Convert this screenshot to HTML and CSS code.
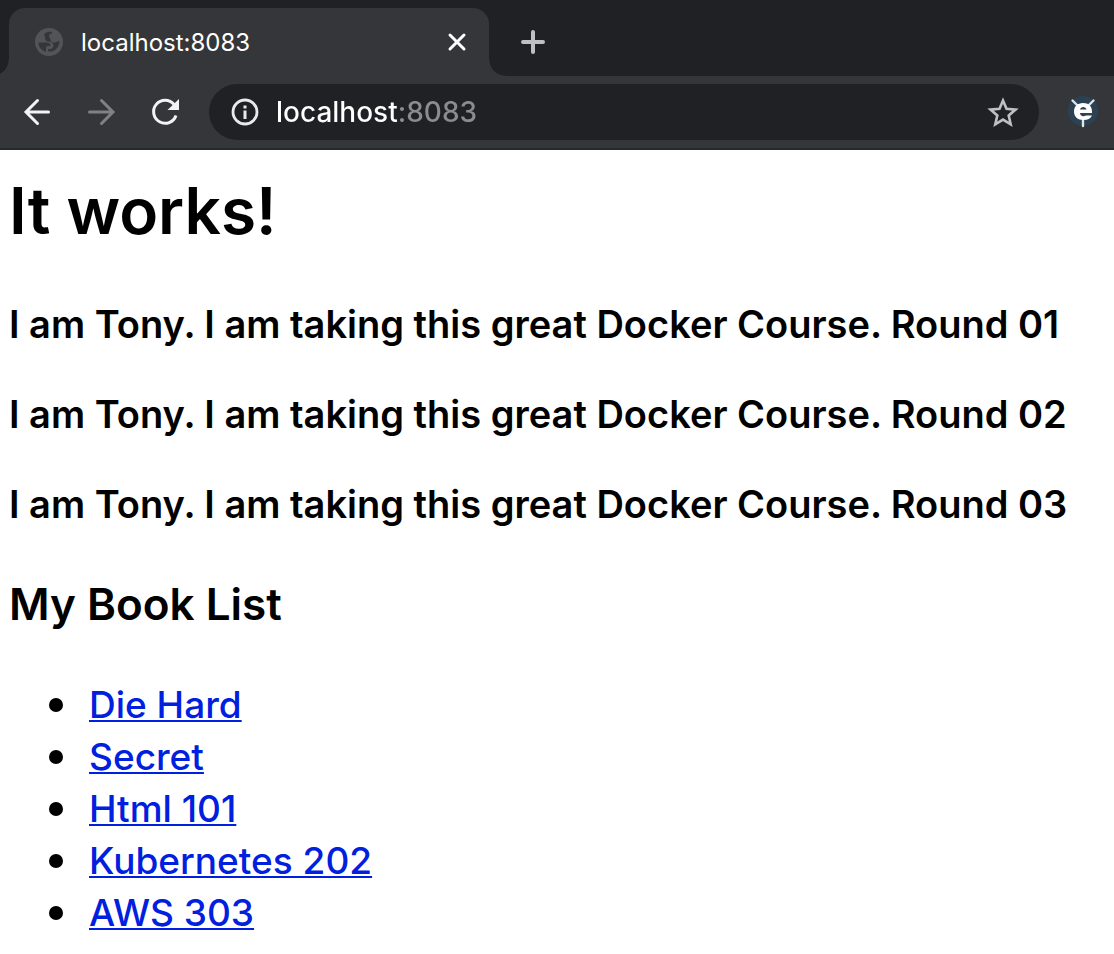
FILE: index.html
```html
<!DOCTYPE html>
<html lang="en">
<head>
<meta charset="utf-8">
<title>localhost:8083</title>
<link rel="stylesheet" href="styles.css">
</head>
<body>
<header class="browser">
  <div class="tabs">
    <div class="tab">
      <svg class="globe" viewBox="0 0 28 28" aria-hidden="true"><circle cx="14" cy="14" r="14" fill="#525458"/><path d="M3.500 14.500h8.500c2.500 0 3.500 1.500 3.500 3.500h-2.500c-1.500 0-2 1-2 2v4C6.500 22.500 3.500 19 3.500 14.500zM9.500 5.500C12 4 14 3.500 17 4v1.500c-2 0-3 1-3 2.500 0 2 1.500 1.500 1.500 3.500 0 2 1.500 3 3.500 3 2.500 0 3-1.500 5.500-1.500 0 5-3 9-7.500 10.500h-4v-2.500c3 0 5.500-.500 5.500-3.500 0-2-2-4-5-4-2.500 0-3.500-1.500-3.500-4 0-1.500-1-2-.500-4z" fill="#35363a"/></svg>
      <span class="tab-title">localhost:8083</span>
      <button class="icon-button close" aria-label="Close tab"><svg viewBox="0 0 20 20"><path d="M3 3l14 14M17 3L3 17" stroke="#fff" stroke-width="3" stroke-linecap="round"/></svg></button>
    </div>
    <button class="icon-button new-tab" aria-label="New tab"><svg viewBox="0 0 28 28"><path d="M14 4v20M4 14h20" stroke="#bdc1c6" stroke-width="4" stroke-linecap="round"/></svg></button>
  </div>
  <div class="toolbar">
    <nav class="nav" aria-label="History">
      <button class="icon-button" aria-label="Back"><svg viewBox="0 0 32 32"><path d="M27.500 16H6M16.500 4.500L5 16l11.500 11.500" fill="none" stroke="#f1f3f4" stroke-width="3" stroke-linecap="round"/></svg></button>
      <button class="icon-button" aria-label="Forward" disabled><svg viewBox="0 0 32 32"><path d="M4.500 16H26M16.500 4.500L28 16 16.500 27.500" fill="none" stroke="#7f8185" stroke-width="3" stroke-linecap="round"/></svg></button>
      <button class="icon-button" aria-label="Reload"><svg viewBox="0 0 32 32"><path d="M27 19.500A11.500 11.500 0 1 1 25 8.500" fill="none" stroke="#f1f3f4" stroke-width="3"/><path d="M30 3v11H18.500z" fill="#f1f3f4"/></svg></button>
    </nav>
    <div class="address">
      <button class="icon-button info" aria-label="View site information"><svg viewBox="0 0 28 28"><circle cx="14" cy="14" r="12" fill="none" stroke="#e8eaed" stroke-width="2.800"/><path d="M12.500 12.500h3V21h-3zM12.500 7.500h3v3h-3z" fill="#e8eaed"/></svg></button>
      <input class="url" type="text" value="localhost:8083" aria-label="Address" spellcheck="false">
      <button class="icon-button" aria-label="Bookmark this page"><svg viewBox="0 0 32 32"><path d="M16 4.500l3.500 8.300 9 .800-6.800 5.900 2 8.800L16 23.600l-7.700 4.700 2-8.800-6.800-5.900 9-.800z" fill="none" stroke="#bdc1c6" stroke-width="2.600"/></svg></button>
    </div>
    <button class="icon-button extension" aria-label="Extension"><svg viewBox="0 0 32 32"><circle cx="16" cy="15" r="15" fill="#2b4254"/><path d="M5.500 4.500l5 5M26.500 4.500l-5 5M16 23v7" stroke="#dfe6ea" stroke-width="2.400" stroke-linecap="round"/><path d="M25 17c.500-7-3.500-10-9-10S7 10.500 7 15.500 10.500 24 16.500 24c4.500 0 7-1.500 8.500-4.500h-6c-3 1.500-6 .500-6-2.500zM13 13.500c.500-3.500 6-3.500 6.500 0z" fill="#fff" fill-rule="evenodd"/></svg></button>
  </div>
</header>
<main class="page">
  <h1 class="title">It works!</h1>
  <div class="rounds">
    <h4 class="round">I am Tony. I am taking this great Docker Course. Round 01</h4>
    <h4 class="round">I am Tony. I am taking this great Docker Course. Round 02</h4>
    <h4 class="round">I am Tony. I am taking this great Docker Course. Round 03</h4>
  </div>
  <h3 class="subtitle">My Book List</h3>
  <ul class="books">
    <li><a href="#die-hard">Die Hard</a></li>
    <li><a href="#secret">Secret</a></li>
    <li><a href="#html">Html 101</a></li>
    <li><a href="#kubernetes">Kubernetes 202</a></li>
    <li><a href="#aws">AWS 303</a></li>
  </ul>
</main>
</body>
</html>
```
FILE: styles.css
```css
* { box-sizing: border-box; }
body { margin: 0; background: #fff; color: #000; font-family: Inter, "Liberation Sans", sans-serif; }

.browser { background: #35363a; border-bottom: 2px solid #28292b; }
.icon-button { display: block; flex: none; width: 32px; height: 32px; padding: 0; border: 0; background: none; }
.icon-button svg { display: block; width: 100%; height: 100%; }

.tabs { display: flex; align-items: center; height: 76px; padding: 8px 9px 0; background: #202124; }
.tab { position: relative; display: flex; align-items: center; width: 480px; height: 68px; padding: 0 22px 0 26px; border-radius: 16px 16px 0 0; background: #35363a; }
.tab::before, .tab::after { content: ""; position: absolute; bottom: 0; width: 16px; height: 16px; }
.tab::before { right: 100%; background: radial-gradient(circle at 0 0, #202124 15px, #35363a 16px); }
.tab::after { left: 100%; background: radial-gradient(circle at 100% 0, #202124 15px, #35363a 16px); }
.globe { width: 28px; height: 28px; }
.tab-title { flex: 1; margin-left: 18px; color: #fff; font-size: 24px; }
.close { width: 20px; height: 20px; }
.new-tab { width: 28px; height: 28px; margin-left: 30px; }

.toolbar { display: flex; align-items: center; gap: 28px; height: 72px; padding: 0 15px 0 21px; }
.nav { display: flex; gap: 32px; }
.address { display: flex; align-items: center; flex: 1; height: 56px; padding: 0 20px 0 22px; border-radius: 28px; background: #202124; }
.info { width: 28px; height: 28px; }
.url { flex: 1; min-width: 0; margin-left: 17px; padding: 0; border: 0; outline: 0; color: transparent; background: linear-gradient(to right, #fff 121px, #8a8c90 121px); background-clip: text; -webkit-background-clip: text; font-family: inherit; font-size: 28px; font-weight: 500; }

.page { padding: 21px 9px 16px; }
.title, .round, .subtitle { margin: 0; font-weight: 600; }
.title { font-size: 64px; line-height: 80px; }
.rounds { display: grid; gap: 40px; margin-top: 48px; }
.round { font-size: 38px; line-height: 50px; }
.subtitle { margin-top: 45px; font-size: 44px; line-height: 60px; }
.books { margin: 45px 0 0; padding-left: 40px; list-style: none; font-size: 37px; line-height: 52px; font-weight: 500; }
.books li { display: flex; align-items: center; gap: 26px; }
.books li::before { content: ""; width: 14px; height: 14px; border-radius: 50%; background: #000; }
.books a { color: #0020df; text-decoration: underline; text-decoration-thickness: 2px; text-underline-offset: 2px; text-decoration-skip-ink: none; }
```
